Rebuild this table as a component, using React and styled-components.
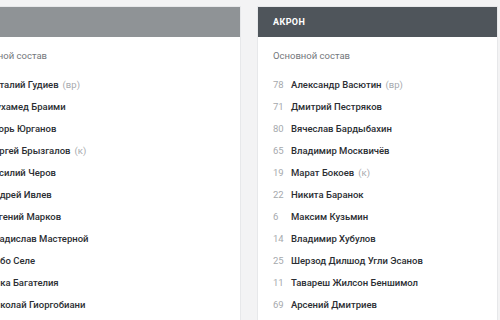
import React from 'react';
import styled, { createGlobalStyle } from 'styled-components';

////////// data //////////

const teams = [
  {
    name: 'СКА',
    dark: false,
    players: [
      { num: 35, name: 'Виталий Гудиев', tag: 'вр' },
      { num: 4, name: 'Мухамед Браими' },
      { num: 5, name: 'Игорь Юрганов' },
      { num: 7, name: 'Сергей Брызгалов', tag: 'к' },
      { num: 8, name: 'Василий Черов' },
      { num: 9, name: 'Андрей Ивлев' },
      { num: 10, name: 'Евгений Марков' },
      { num: 17, name: 'Владислав Мастерной' },
      { num: 20, name: 'Лобо Селе' },
      { num: 21, name: 'Ника Багателия' },
      { num: 23, name: 'Николай Гиоргобиани' },
    ],
  },
  {
    name: 'АКРОН',
    dark: true,
    players: [
      { num: 78, name: 'Александр Васютин', tag: 'вр' },
      { num: 71, name: 'Дмитрий Пестряков' },
      { num: 80, name: 'Вячеслав Бардыбахин' },
      { num: 65, name: 'Владимир Москвичёв' },
      { num: 19, name: 'Марат Бокоев', tag: 'к' },
      { num: 22, name: 'Никита Баранок' },
      { num: 6, name: 'Максим Кузьмин' },
      { num: 14, name: 'Владимир Хубулов' },
      { num: 25, name: 'Шерзод Дилшод Угли Эсанов' },
      { num: 11, name: 'Тавареш Жилсон Беншимол' },
      { num: 69, name: 'Арсений Дмитриев' },
    ],
  },
];

////////// global //////////

const Global = createGlobalStyle`
  html, body {
    margin:0;
    padding:0;
    background:#f3f3f4;
    overflow:hidden;
  }
  body {
    font-family:Roboto, 'Liberation Sans', sans-serif;
  }
`;

////////// layout //////////

const Page = styled.div`
  width:500px;
  height:320px;
  overflow:hidden;
`;

const Columns = styled.div`
  display:flex;
  gap:16px;
  margin-left:-46px;
  padding-top:6px;
`;

////////// card //////////

const Card = styled.div`
  width:${p => p.$width}px;
  flex:none;
  height:330px;
  background:#fff;
  border:1px solid #e7e8ea;
  box-sizing:border-box;
`;

const Header = styled.div`
  height:30px;
  display:flex;
  align-items:center;
  padding:0 15px;
  background:${p => (p.$dark ? '#4f555b' : '#8f9396')};
  color:#fff;
  font-size:9px;
  font-weight:700;
  letter-spacing:0.4px;
`;

const Body = styled.div`
  padding:13px 15px 0 15px;
`;

const Label = styled.div`
  font-size:9.5px;
  line-height:12px;
  color:#73777c;
  margin-bottom:11px;
`;

const Row = styled.div`
  display:flex;
  align-items:center;
  height:22.1px;
  font-size:9.5px;
`;

const Num = styled.span`
  width:18px;
  flex:none;
  color:#a6a9ad;
`;

const Name = styled.span`
  color:#2b2e33;
  font-weight:500;
`;

const Tag = styled.span`
  color:#a6a9ad;
  margin-left:4px;
`;

////////// team //////////

const Team = ({ team, width }) => (
  <Card $width={width}>
    <Header $dark={team.dark}>{team.name}</Header>
    <Body>
      <Label>Основной состав</Label>
      {team.players.map(p => (
        <Row key={p.num + p.name}>
          <Num>{p.num}</Num>
          <Name>{p.name}</Name>
          {p.tag && <Tag>({p.tag})</Tag>}
        </Row>
      ))}
    </Body>
  </Card>
);

export default function App() {
  return (
    <Page>
      <Global />
      <Columns>
        <Team team={teams[0]} width={287} />
        <Team team={teams[1]} width={241} />
      </Columns>
    </Page>
  );
}
